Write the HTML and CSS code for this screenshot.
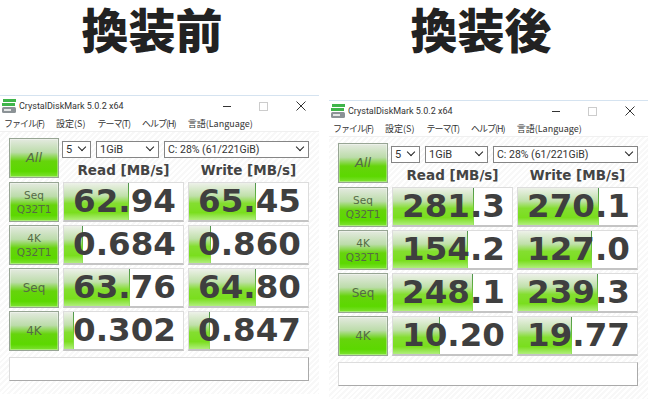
FILE: index.html
```html
<!DOCTYPE html>
<html lang="en">
<head>
    <meta charset="UTF-8">
    <meta name="viewport" content="width=device-width, initial-scale=1.0">
    <title>換装前 換装後</title>
    <link rel="stylesheet" href="styles.css">
</head>
<body>
    <section class="side side-before">
        <h1 class="side-title">換装前</h1>
        <div class="window">
            <div class="titlebar">
                <svg class="app-icon" width="16" height="16" viewBox="0 0 16 16"><rect x="2" y="1" width="13" height="3" fill="#3fb54a"/><rect x="1" y="5" width="13" height="3" fill="#3fb54a"/><rect x="1" y="9" width="14" height="6" rx="1.5" fill="#8b9296"/><rect x="3" y="11" width="7" height="2" fill="#e4e6e6"/></svg>
                <span class="app-name">CrystalDiskMark 5.0.2 x64</span>
                <span class="win-btn win-min"></span>
                <span class="win-btn win-max"></span>
                <svg class="win-btn" width="10" height="10" viewBox="0 0 10 10"><path d="M0.5 0.5L9.5 9.5M9.5 0.5L0.5 9.5" stroke="#333" fill="none"/></svg>
            </div>
            <div class="menu"><span class="kana">ファイル(F)</span><span>設定(S)</span><span class="kana">テーマ(T)</span><span class="kana">ヘルプ(H)</span><span>言語(Language)</span></div>
            <div class="panel">
                <div class="grid">
                    <div class="btn btn-all">All</div>
                    <div class="controls">
                        <div class="selects">
                            <div class="sel sel-count">5</div>
                            <div class="sel sel-size">1GiB</div>
                            <div class="sel sel-drive">C: 28% (61/221GiB)</div>
                        </div>
                        <div class="heads"><span>Read [MB/s]</span><span>Write [MB/s]</span></div>
                    </div>
                    <div class="btn">Seq<br>Q32T1</div>
                    <div class="cell"><div class="bar" style="width: 65px"></div><span class="val">62.94</span></div>
                    <div class="cell"><div class="bar" style="width: 67px"></div><span class="val">65.45</span></div>
                    <div class="btn">4K<br>Q32T1</div>
                    <div class="cell"><div class="bar" style="width: 19px"></div><span class="val">0.684</span></div>
                    <div class="cell"><div class="bar" style="width: 22px"></div><span class="val">0.860</span></div>
                    <div class="btn btn-big">Seq</div>
                    <div class="cell"><div class="bar" style="width: 66px"></div><span class="val">63.76</span></div>
                    <div class="cell"><div class="bar" style="width: 67px"></div><span class="val">64.80</span></div>
                    <div class="btn btn-big">4K</div>
                    <div class="cell"><div class="bar" style="width: 10px"></div><span class="val">0.302</span></div>
                    <div class="cell"><div class="bar" style="width: 21px"></div><span class="val">0.847</span></div>
                </div>
                <div class="comment"></div>
            </div>
        </div>
    </section>
    <section class="side side-after">
        <h1 class="side-title">換装後</h1>
        <div class="window">
            <div class="titlebar">
                <svg class="app-icon" width="16" height="16" viewBox="0 0 16 16"><rect x="2" y="1" width="13" height="3" fill="#3fb54a"/><rect x="1" y="5" width="13" height="3" fill="#3fb54a"/><rect x="1" y="9" width="14" height="6" rx="1.5" fill="#8b9296"/><rect x="3" y="11" width="7" height="2" fill="#e4e6e6"/></svg>
                <span class="app-name">CrystalDiskMark 5.0.2 x64</span>
                <span class="win-btn win-min"></span>
                <span class="win-btn win-max"></span>
                <svg class="win-btn" width="10" height="10" viewBox="0 0 10 10"><path d="M0.5 0.5L9.5 9.5M9.5 0.5L0.5 9.5" stroke="#333" fill="none"/></svg>
            </div>
            <div class="menu"><span class="kana">ファイル(F)</span><span>設定(S)</span><span class="kana">テーマ(T)</span><span class="kana">ヘルプ(H)</span><span>言語(Language)</span></div>
            <div class="panel">
                <div class="grid">
                    <div class="btn btn-all">All</div>
                    <div class="controls">
                        <div class="selects">
                            <div class="sel sel-count">5</div>
                            <div class="sel sel-size">1GiB</div>
                            <div class="sel sel-drive">C: 28% (61/221GiB)</div>
                        </div>
                        <div class="heads"><span>Read [MB/s]</span><span>Write [MB/s]</span></div>
                    </div>
                    <div class="btn">Seq<br>Q32T1</div>
                    <div class="cell"><div class="bar" style="width: 81px"></div><span class="val">281.3</span></div>
                    <div class="cell"><div class="bar" style="width: 81px"></div><span class="val">270.1</span></div>
                    <div class="btn">4K<br>Q32T1</div>
                    <div class="cell"><div class="bar" style="width: 75px"></div><span class="val">154.2</span></div>
                    <div class="cell"><div class="bar" style="width: 74px"></div><span class="val">127.0</span></div>
                    <div class="btn btn-big">Seq</div>
                    <div class="cell"><div class="bar" style="width: 80px"></div><span class="val">248.1</span></div>
                    <div class="cell"><div class="bar" style="width: 80px"></div><span class="val">239.3</span></div>
                    <div class="btn btn-big">4K</div>
                    <div class="cell"><div class="bar" style="width: 47px"></div><span class="val">10.20</span></div>
                    <div class="cell"><div class="bar" style="width: 54px"></div><span class="val">19.77</span></div>
                </div>
                <div class="comment"></div>
            </div>
        </div>
    </section>
</body>
</html>
```

FILE: styles.css
```css
body {
    margin: 0;
    height: 400px;
    overflow: hidden;
    background: #fff;
    display: flex;
    font-family: "Noto Sans CJK JP", sans-serif;
}
.side { display: flex; flex-direction: column; }
.side-before { width: 329px; padding-right: 10px; box-sizing: border-box; }
.side-after { width: 319px; }
.side-title {
    margin: 0;
    box-sizing: border-box;
    padding: 5px 15px 0 0;
    font-family: "Liberation Sans", "Noto Sans CJK JP", sans-serif;
    font-size: 47px;
    line-height: 54px;
    font-weight: 900;
    color: #222;
    text-align: center;
}
.side-before .side-title { height: 95px; }
.side-after .side-title { height: 100px; }
.window {
    border-top: 1px solid #d5e3f0;
    background: #fff;
}
.titlebar {
    height: 20px;
    display: flex;
    align-items: center;
    padding: 0 13px 0 1px;
    font-family: Roboto, sans-serif;
    font-size: 9px;
    color: #333;
}
.app-icon { margin-right: 2px; }
.app-name { flex: 1; }
.win-btn { flex: none; }
.win-min { width: 8px; height: 1px; background: #333; margin-right: 28px; }
.win-max { width: 7px; height: 7px; border: 1px solid #ccc; margin-right: 28px; }
.menu {
    height: 15px;
    display: flex;
    gap: 12px;
    padding-left: 4px;
    font-size: 9px;
    line-height: 15px;
    color: #333;
    border-bottom: 1px solid #f0f0f0;
}
.kana { letter-spacing: -1px; }
.panel {
    padding: 6px 10px 0 9px;
    height: 256px;
    background: repeating-linear-gradient(135deg, #fff, #fff 2px, #f8f8f8 2px, #f8f8f8 4px);
}
.grid {
    display: grid;
    grid-template-columns: 50px 121px 121px;
    grid-template-rows: 41px repeat(4, 40px);
    gap: 3px 4px;
}
.btn {
    border: 1px solid #97a594;
    box-shadow: inset 0 0 0 1px rgba(255, 255, 255, 0.35);
    box-sizing: border-box;
    height: 40px;
    background: linear-gradient(#e4eae0 0%, #bcdcaa 35%, #66d40c 58%, #5cd800 85%, #7fe234 100%);
    color: #556b45;
    font-family: "DejaVu Sans", sans-serif;
    font-size: 10.5px;
    line-height: 14px;
    display: flex;
    align-items: center;
    justify-content: center;
    text-align: center;
}
.btn-all { font-size: 13px; font-style: italic; }
.btn-big { font-size: 12px; }
.controls { grid-column: span 2; display: flex; flex-direction: column; }
.selects { display: flex; gap: 5px; height: 17px; margin: 3px 0 0 -1px; }
.sel {
    border: 1px solid #858585;
    box-sizing: border-box;
    background: #fff;
    font-family: Roboto, sans-serif;
    font-size: 11px;
    line-height: 15px;
    padding-left: 3px;
    color: #333;
    position: relative;
}
.sel::after {
    content: "";
    position: absolute;
    right: 5px;
    top: 2px;
    width: 5px;
    height: 5px;
    border: solid #222;
    border-width: 0 1.5px 1.5px 0;
    transform: rotate(45deg);
}
.sel-count { width: 29px; }
.sel-size { width: 63px; }
.sel-drive { width: 145px; font-size: 10.5px; }
.heads {
    display: grid;
    grid-template-columns: 121px 121px;
    gap: 4px;
    font-family: "DejaVu Sans", sans-serif;
    font-weight: 700;
    font-size: 13.5px;
    line-height: 24px;
    color: #444;
    text-align: center;
}
.cell {
    position: relative;
    border: 1px solid #ddd;
    border-bottom: 2px solid #c4c4c4;
    box-sizing: border-box;
    background: #fff;
    padding-left: 2px;
    text-align: center;
    overflow: hidden;
}
.bar {
    position: absolute;
    left: 0;
    top: 0;
    bottom: 0;
    box-sizing: border-box;
    border-right: 1px solid;
    border-image: linear-gradient(#4f8f50, #6fd030 60%, #9ae860) 1;
    background: linear-gradient(#edf1e9 0%, #c0e0aa 35%, #84de30 55%, #7ade1e 80%, #b0ee7c 100%);
}
.val {
    position: relative;
    font-family: "DejaVu Sans", sans-serif;
    font-weight: 700;
    font-size: 32.5px;
    line-height: 37px;
    color: #3f3f3f;
}
.comment {
    margin-top: 6px;
    width: 300px;
    height: 24px;
    box-sizing: border-box;
    background: #fff;
    border: 1px solid #ddd;
    border-bottom: 1px solid #aaa;
    border-right: 1px solid #aaa;
}
```
